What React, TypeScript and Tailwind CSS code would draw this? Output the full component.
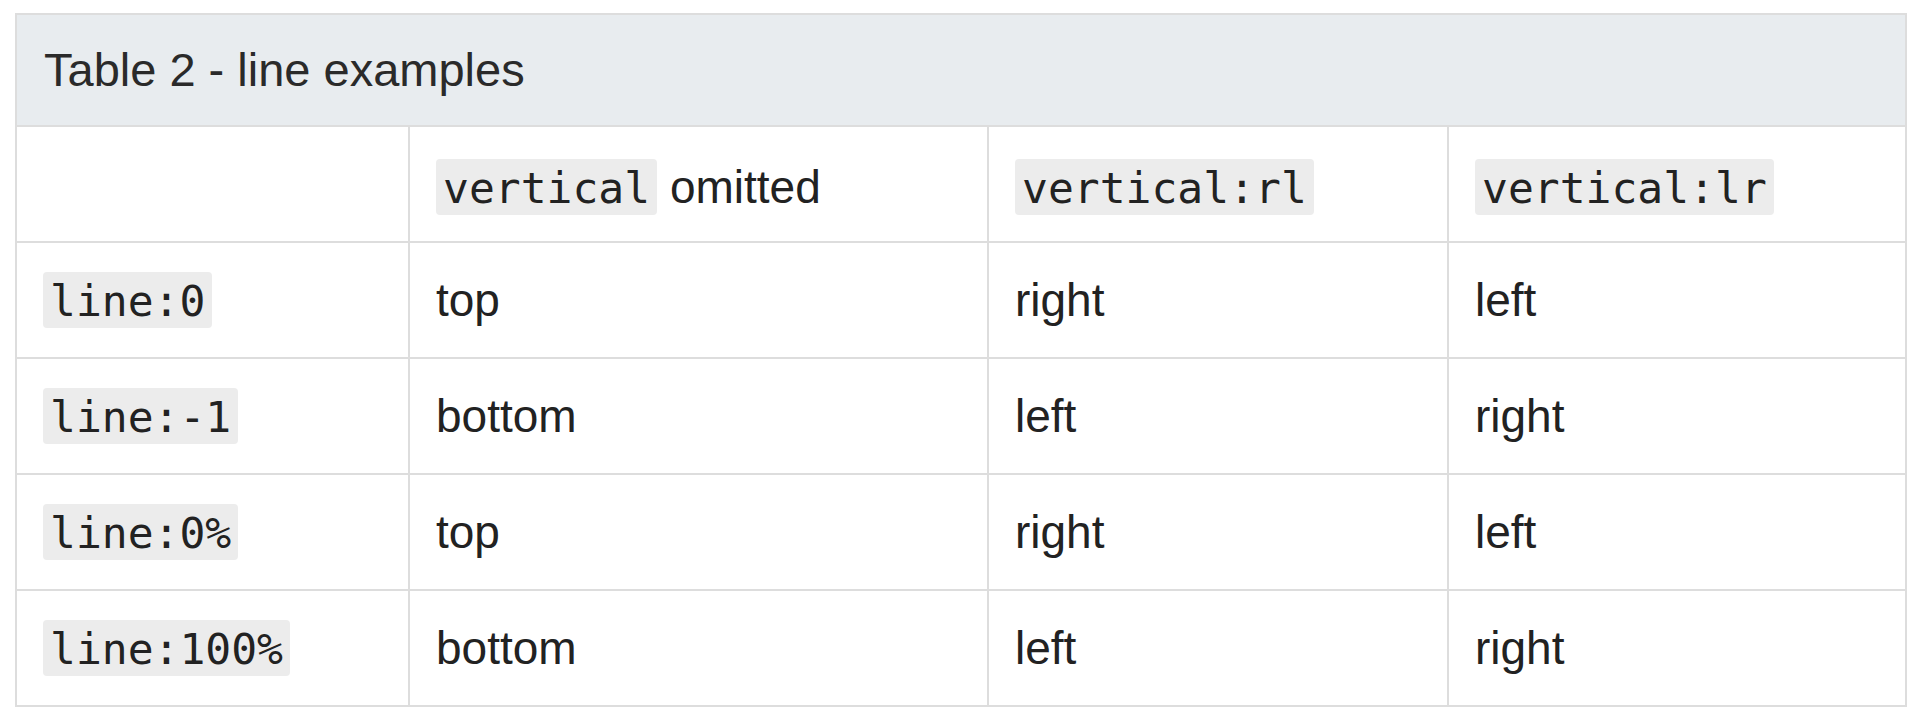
import { Fragment } from "react"

const rows = [
  { key: "line:0", cells: ["top", "right", "left"] },
  { key: "line:-1", cells: ["bottom", "left", "right"] },
  { key: "line:0%", cells: ["top", "right", "left"] },
  { key: "line:100%", cells: ["bottom", "left", "right"] },
]

function Code({ children }: { children: string }) {
  return (
    <code className="inline-block h-[56px] rounded-[4px] bg-[#ececec] px-[7px] font-['DejaVu_Sans_Mono','Liberation_Mono',monospace] text-[43px] leading-[58px] text-[#222]">
      {children}
    </code>
  )
}

function Cell({ children }: { children?: React.ReactNode }) {
  return <div className="flex h-[114px] items-center bg-white px-[26px]">{children}</div>
}

export default function App() {
  return (
    <main className="min-h-screen bg-white pl-[15px] pt-[13px] font-['Liberation_Sans',Arial,sans-serif] text-[46px] text-[#222]">
      <div className="w-[1892px] bg-[#dddddd] p-[2px]">
        {/* caption */}
        <div className="flex h-[110px] items-center bg-[#e8ecef] px-[27px] text-[47px] text-[#2a2a2a]">
          Table 2 - line examples
        </div>

        <div className="mt-[2px] grid grid-cols-[391px_577px_458px_456px] gap-[2px]">
          <Cell />
          <Cell>
            <span className="pt-[6px]">
              <Code>vertical</Code> omitted
            </span>
          </Cell>
          <Cell>
            <span className="pt-[6px]">
              <Code>vertical:rl</Code>
            </span>
          </Cell>
          <Cell>
            <span className="pt-[6px]">
              <Code>vertical:lr</Code>
            </span>
          </Cell>

          {rows.map((row) => (
            <Fragment key={row.key}>
              <Cell>
                <Code>{row.key}</Code>
              </Cell>
              {row.cells.map((c, i) => (
                <Cell key={i}>{c}</Cell>
              ))}
            </Fragment>
          ))}
        </div>
      </div>
    </main>
  )
}
